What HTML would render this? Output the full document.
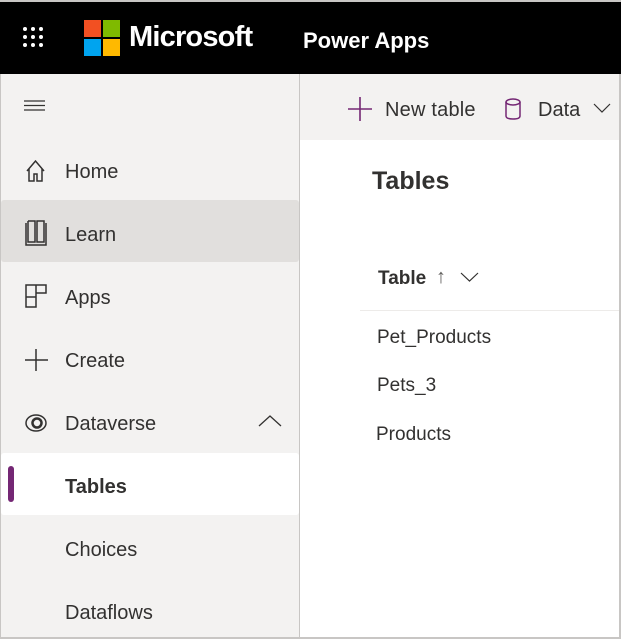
<!DOCTYPE html>
<html><head><style>
*{margin:0;padding:0;box-sizing:border-box}
body{width:621px;height:639px;overflow:hidden;background:#fff;font-family:"Segoe UI","Liberation Sans",sans-serif;position:relative;color:#323130}
.a{position:absolute}
.t{position:absolute;white-space:nowrap;line-height:1}
</style></head><body>
<div class="a" style="left:0;top:0;width:621px;height:2px;background:#c8c6c4"></div>
<div class="a" style="left:0;top:2px;width:621px;height:72px;background:#000"></div>
<svg class="a" style="left:22px;top:26px" width="22" height="22">
<g fill="#fff"><circle cx="3" cy="3" r="2"/><circle cx="11" cy="3" r="2"/><circle cx="19" cy="3" r="2"/><circle cx="3" cy="11" r="2"/><circle cx="11" cy="11" r="2"/><circle cx="19" cy="11" r="2"/><circle cx="3" cy="19" r="2"/><circle cx="11" cy="19" r="2"/><circle cx="19" cy="19" r="2"/></g></svg>
<div class="a" style="left:84px;top:20px;width:17px;height:17px;background:#f25022"></div>
<div class="a" style="left:103px;top:20px;width:17px;height:17px;background:#7fba00"></div>
<div class="a" style="left:84px;top:39px;width:17px;height:17px;background:#00a4ef"></div>
<div class="a" style="left:103px;top:39px;width:17px;height:17px;background:#ffb900"></div>
<div class="t" style="left:129px;top:23px;font-size:29px;color:#fff;font-weight:600;letter-spacing:-0.8px">Microsoft</div>
<div class="t" style="left:303px;top:30px;font-size:22px;color:#fff;font-weight:600">Power Apps</div>
<!-- sidebar -->
<div class="a" style="left:0;top:74px;width:300px;height:565px;background:#f3f2f1;border-left:1px solid #c8c6c4;border-right:1px solid #c8c6c4"></div>
<div class="a" style="left:300px;top:74px;width:321px;height:66px;background:#f3f2f1"></div>
<div class="a" style="left:619px;top:74px;width:2px;height:565px;background:#c8c6c4"></div>
<div class="a" style="left:0;top:637px;width:621px;height:2px;background:#c8c6c4"></div>
<svg class="a" style="left:24px;top:100px" width="24" height="12"><path d="M0 1h21M0 5.5h21M0 10h21" stroke="#323130" stroke-width="1.2"/></svg>
<div class="a" style="left:1px;top:200px;width:298px;height:62px;background:#e1dfdd;border-radius:3px"></div>
<div class="a" style="left:1px;top:453px;width:298px;height:62px;background:#fff;border-radius:3px"></div>
<div class="a" style="left:8px;top:466px;width:6px;height:36px;background:#742774;border-radius:3px"></div>
<svg class="a" style="left:24px;top:157px" width="26" height="300" fill="none" stroke="#323130" stroke-width="1.5">
<path d="M3 14L11.5 4L20 14M5 12V24H10V17H13V24H18V12"/>
<path d="M2 68V90H22V68M4 66V87H11V66H4M13 66H20V87H13Z" transform="translate(0,-2)"/>
<path d="M2 128H22V136H12V150H2ZM12 128V136M2 140H12"/>
<path d="M12 192V214M1 203H24"/>
<ellipse cx="12" cy="266" rx="10" ry="8"/><circle cx="13" cy="266" r="4.5" stroke-width="2.5"/>
</svg>
<div class="t" style="left:65px;top:162px;font-size:20px">Home</div>
<div class="t" style="left:65px;top:225px;font-size:20px">Learn</div>
<div class="t" style="left:65px;top:288px;font-size:20px">Apps</div>
<div class="t" style="left:65px;top:351px;font-size:20px">Create</div>
<div class="t" style="left:65px;top:414px;font-size:20px">Dataverse</div>
<svg class="a" style="left:258px;top:414px" width="24" height="14"><path d="M1 12L12 2L23 12" fill="none" stroke="#323130" stroke-width="1.3"/></svg>
<div class="t" style="left:65px;top:477px;font-size:20px;font-weight:600">Tables</div>
<div class="t" style="left:65px;top:540px;font-size:20px">Choices</div>
<div class="t" style="left:65px;top:603px;font-size:20px">Dataflows</div>
<!-- toolbar -->
<svg class="a" style="left:347px;top:96px" width="26" height="26"><path d="M13 1V25M1 13H25" stroke="#742774" stroke-width="1.6"/></svg>
<div class="t" style="left:385px;top:100px;font-size:20px;letter-spacing:0.2px">New table</div>
<svg class="a" style="left:504px;top:97px" width="20" height="24" fill="none" stroke="#742774" stroke-width="1.5"><ellipse cx="9" cy="5" rx="7" ry="3"/><path d="M2 5V19C2 21 5 22 9 22S16 21 16 19V5"/></svg>
<div class="t" style="left:538px;top:100px;font-size:20px">Data</div>
<svg class="a" style="left:593px;top:102px" width="18" height="12"><path d="M1 2L9 10L17 2" fill="none" stroke="#323130" stroke-width="1.2"/></svg>
<!-- content -->
<div class="t" style="left:372px;top:169px;font-size:25px;font-weight:600">Tables</div>
<div class="t" style="left:378px;top:269px;font-size:19px;font-weight:600">Table</div>
<div class="t" style="left:436px;top:267px;font-size:20px;color:#605e5c">↑</div>
<svg class="a" style="left:460px;top:271px" width="20" height="12"><path d="M1 2L9.5 10L18 2" fill="none" stroke="#323130" stroke-width="1.2"/></svg>
<div class="a" style="left:360px;top:310px;width:259px;height:1px;background:#edebe9"></div>
<div class="t" style="left:377px;top:328px;font-size:19px">Pet_Products</div>
<div class="t" style="left:377px;top:376px;font-size:19px">Pets_3</div>
<div class="t" style="left:376px;top:425px;font-size:19px">Products</div>
</body></html>
